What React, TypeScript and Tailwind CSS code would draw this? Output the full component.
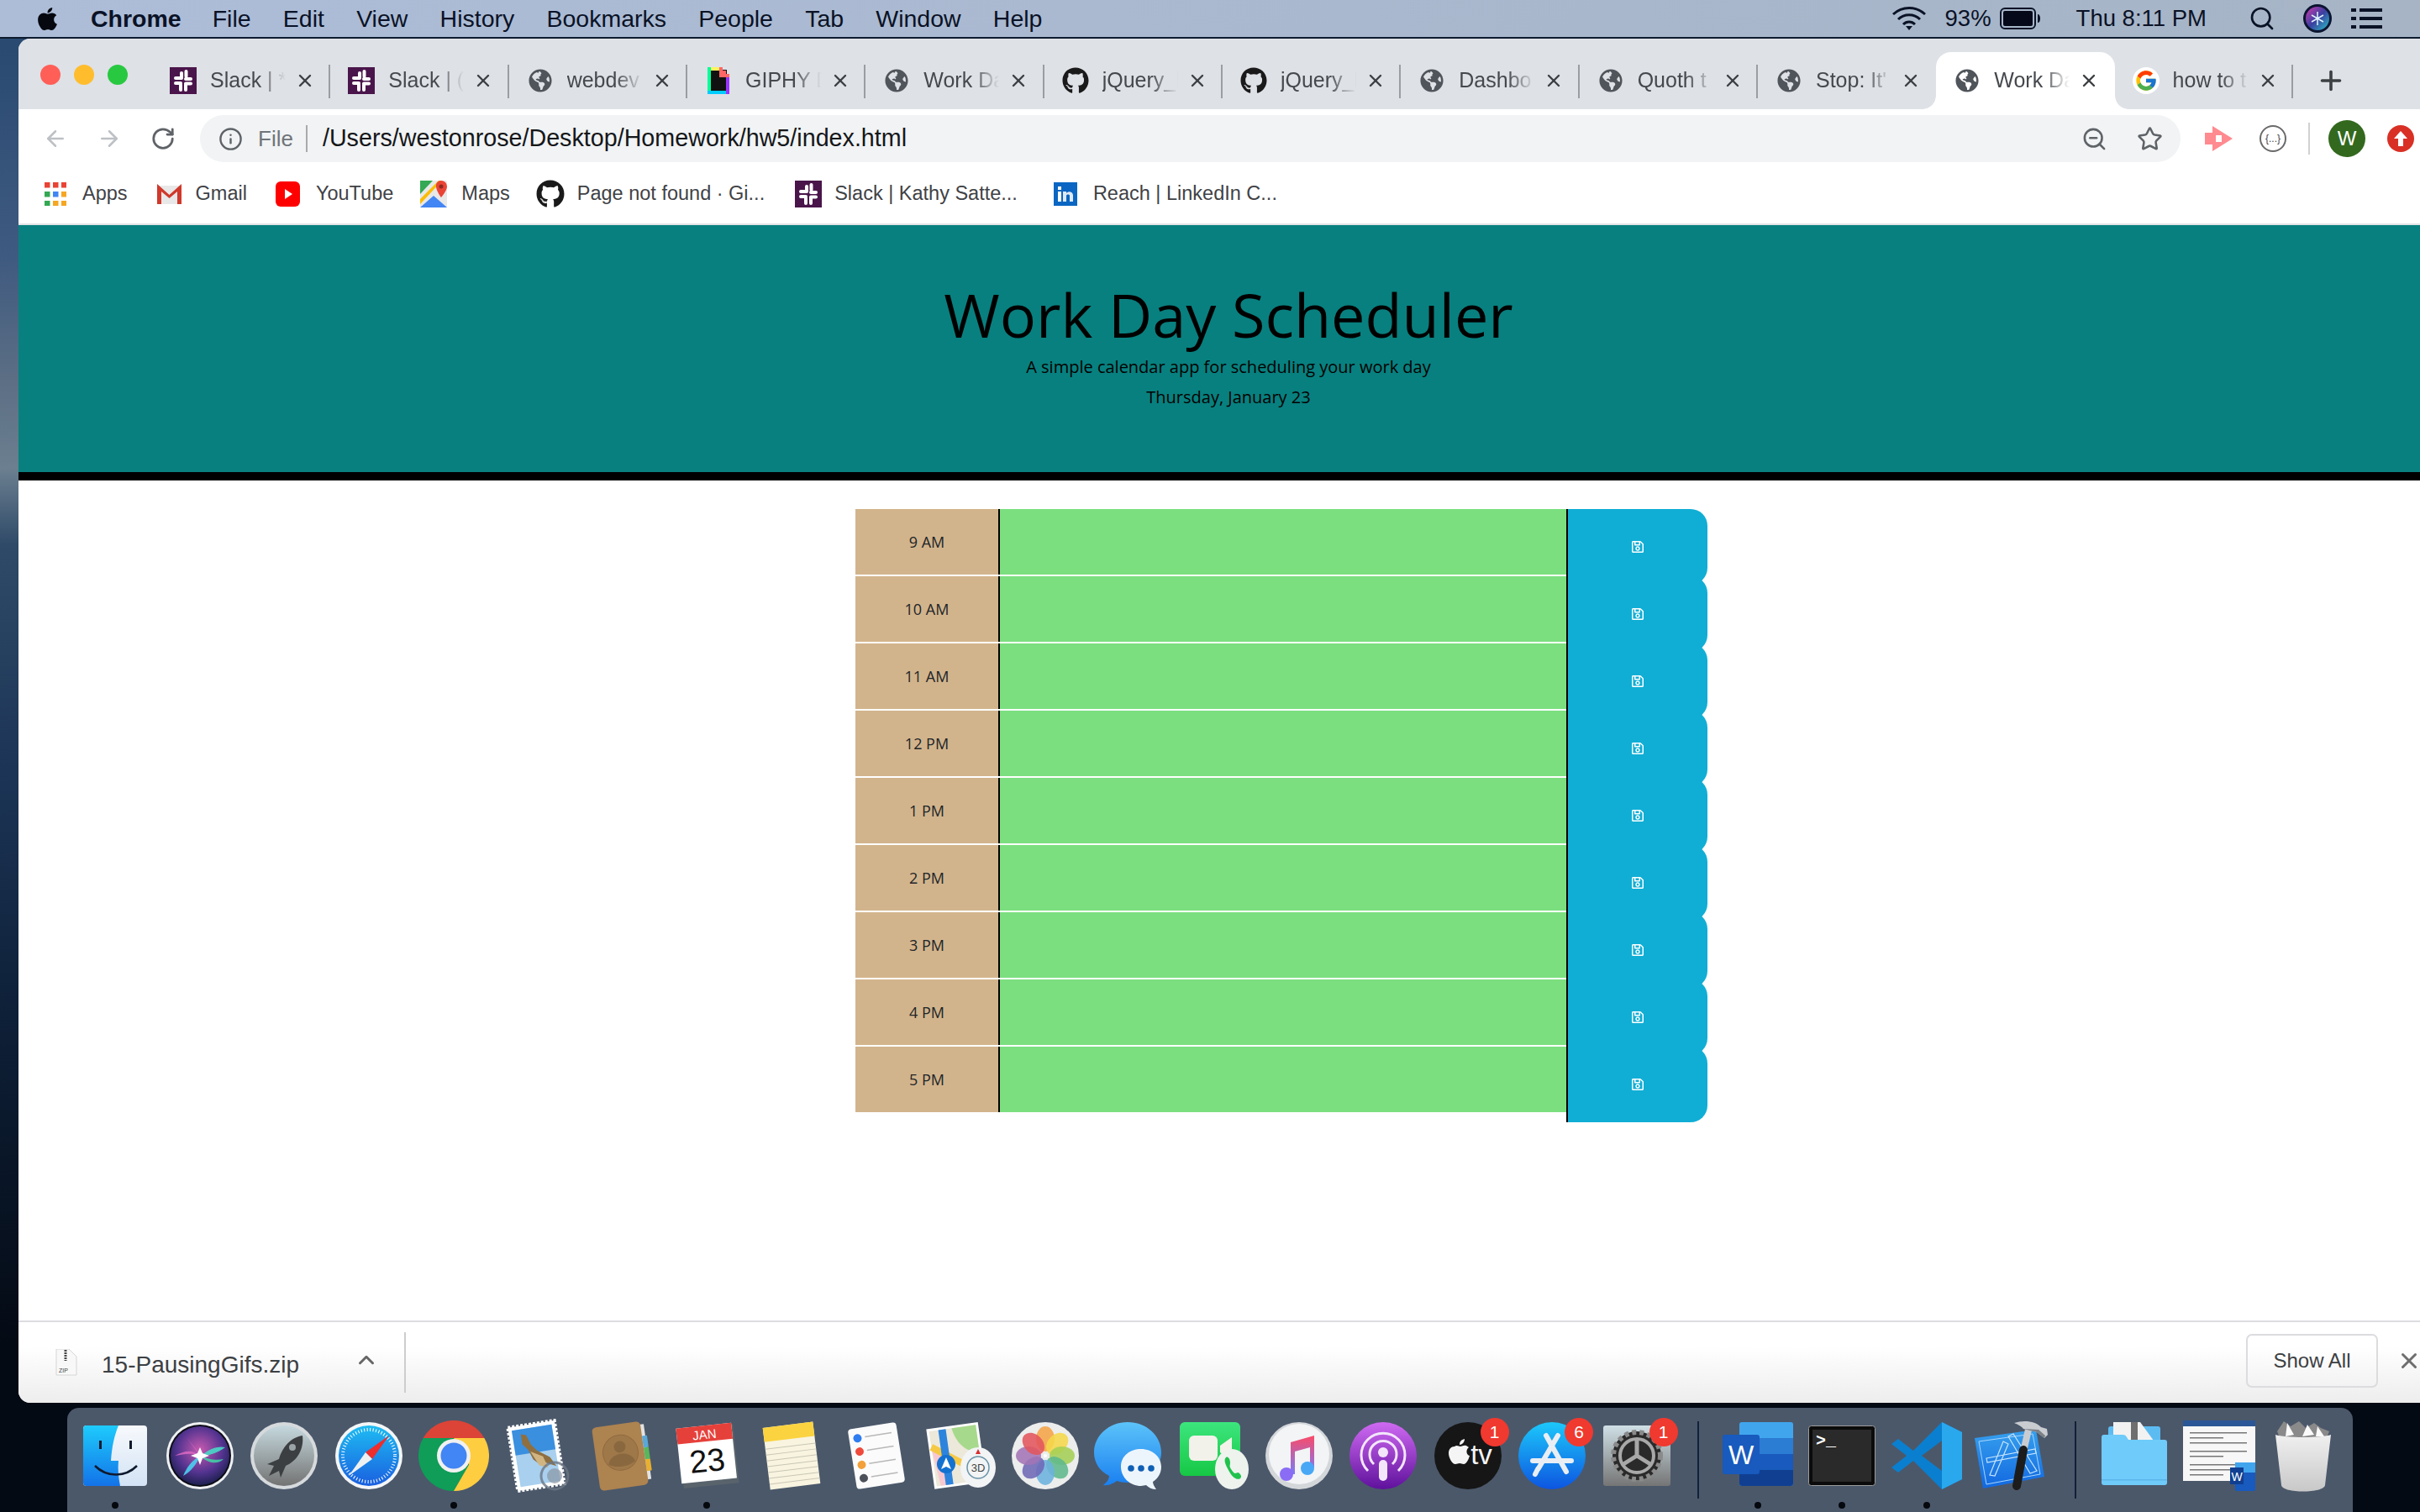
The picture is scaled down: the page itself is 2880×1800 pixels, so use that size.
import React from "react";
import { ArrowLeft, ArrowRight, ChevronUp, Info, Plus, RotateCw, Search, Star, X, ZoomOut } from "lucide-react";
import { FaApple, FaGithub, FaGlobeAmericas, FaRegSave } from "react-icons/fa";
import { FcGoogle } from "react-icons/fc";

const hours = ["9 AM", "10 AM", "11 AM", "12 PM", "1 PM", "2 PM", "3 PM", "4 PM", "5 PM"];

const SlackIcon = () => (
  <svg width="32" height="32" viewBox="0 0 32 32" className="shrink-0">
    <rect width="32" height="32" fill="#4a154b" />
    <g fill="#fff">
      <rect x="12" y="5" width="4" height="10" rx="2" />
      <rect x="17.5" y="3" width="4" height="10" rx="2" />
      <rect x="17" y="12" width="10" height="4" rx="2" />
      <rect x="5" y="11" width="10" height="4" rx="2" />
      <rect x="5" y="17" width="10" height="4" rx="2" />
      <rect x="17" y="17.5" width="10" height="4" rx="2" />
      <rect x="11" y="19" width="4" height="10" rx="2" />
      <rect x="17" y="19" width="4" height="10" rx="2" />
    </g>
  </svg>
);

const GiphyIcon = () => (
  <svg width="26" height="32" viewBox="0 0 26 32" className="shrink-0">
    <rect x="3" y="3" width="20" height="26" fill="#111" />
    <rect x="0" y="0" width="14" height="4" fill="#fff35c" />
    <rect x="0" y="0" width="4" height="32" fill="#00ff99" />
    <rect x="0" y="28" width="26" height="4" fill="#00ccff" />
    <rect x="22" y="8" width="4" height="24" fill="#9933ff" />
    <path d="M14 0h4v4h4v4h4v4H14z" fill="#ff6666" />
  </svg>
);

const GlobeIcon = () => <FaGlobeAmericas className="mx-[2px] shrink-0 text-[28px] text-[#50555b]" />;
const GithubIcon = () => <FaGithub className="shrink-0 text-[32px] text-[#1a1a1a]" />;
const GoogleIcon = () => (
  <span className="flex h-[32px] w-[32px] shrink-0 items-center justify-center rounded-full bg-white">
    <FcGoogle className="text-[28px]" />
  </span>
);

const tabs: { title: string; icon: React.ReactNode; active?: boolean; noSep?: boolean }[] = [
  { title: "Slack | *", icon: <SlackIcon /> },
  { title: "Slack | (", icon: <SlackIcon /> },
  { title: "webdev", icon: <GlobeIcon /> },
  { title: "GIPHY D", icon: <GiphyIcon /> },
  { title: "Work Da", icon: <GlobeIcon /> },
  { title: "jQuery_l", icon: <GithubIcon /> },
  { title: "jQuery_l", icon: <GithubIcon /> },
  { title: "Dashbo", icon: <GlobeIcon /> },
  { title: "Quoth t", icon: <GlobeIcon /> },
  { title: "Stop: It'", icon: <GlobeIcon />, noSep: true },
  { title: "Work Da", icon: <GlobeIcon />, active: true, noSep: true },
  { title: "how to t", icon: <GoogleIcon /> },
];

const Tab = ({ title, icon, active, noSep }: (typeof tabs)[number]) => (
  <div
    className={`relative flex h-[68px] w-[212.33px] shrink-0 items-center pl-[21px] ${
      active ? "rounded-t-[18px] bg-white" : ""
    }`}
  >
    {active && (
      <>
        <span className="absolute bottom-0 left-[-16px] h-[16px] w-[16px] bg-[radial-gradient(circle_at_0_0,#dee1e6_15.5px,#fff_16px)]" />
        <span className="absolute bottom-0 right-[-16px] h-[16px] w-[16px] bg-[radial-gradient(circle_at_100%_0,#dee1e6_15.5px,#fff_16px)]" />
      </>
    )}
    <span className="flex w-[32px] justify-center">{icon}</span>
    <span className="ml-[16px] w-[96px] overflow-hidden whitespace-nowrap text-[25px] text-[#45484c] [mask-image:linear-gradient(to_right,#000_60%,transparent_94%)]">
      {title}
    </span>
    <X className="ml-[5px] shrink-0 text-[#3c4043]" size={24} strokeWidth={2.4} />
    {!noSep && <span className="absolute right-0 top-[15px] h-[40px] w-[2px] bg-[#9a9da1]" />}
  </div>
);

const AppsIcon = () => (
  <svg width="26" height="28" viewBox="0 0 26 28">
    {["#ea4335", "#ea4335", "#ea4335", "#34a853", "#4285f4", "#f5a623", "#34a853", "#f5a623", "#f5a623"].map((c, i) => (
      <rect key={i} x={(i % 3) * 10} y={Math.floor(i / 3) * 11} width="6.5" height="6.5" fill={c} />
    ))}
  </svg>
);

const GmailIcon = () => (
  <svg width="29" height="24" viewBox="0 0 29 24">
    <path d="M0 2h29v22H0z" fill="#e8e8e8" />
    <path d="M0 0l14.5 13L29 0v24h-5V9l-9.500 8L5 9v15H0z" fill="#d0392b" />
  </svg>
);

const YoutubeIcon = () => (
  <svg width="29" height="30" viewBox="0 0 29 30">
    <rect width="29" height="30" rx="6" fill="#ff0000" />
    <path d="M11 9l9 6-9 6z" fill="#fff" />
  </svg>
);

const MapsIcon = () => (
  <svg width="32" height="32" viewBox="0 0 32 32">
    <rect width="32" height="32" rx="2" fill="#e8e8e8" />
    <path d="M0 0h15L0 16z" fill="#34a853" />
    <path d="M0 32l16-14 16 14z" fill="#4285f4" />
    <path d="M0 22L22 0h4L0 28z" fill="#fbbc04" />
    <path d="M25 0a7 7 0 0 1 7 7c0 5-7 13-7 13s-6-8-6-13a6 6 0 0 1 6-7z" fill="#ea4335" />
    <circle cx="25" cy="7" r="2.500" fill="#8e2a20" />
  </svg>
);

const LinkedinIcon = () => (
  <svg width="28" height="28" viewBox="0 0 28 28">
    <rect width="28" height="28" fill="#0a66c2" />
    <rect x="5" y="11" width="4" height="12" fill="#fff" />
    <rect x="5" y="5" width="4" height="4" fill="#fff" />
    <path d="M11 11h4v2c1-2 7-3 8 2v8h-4v-7c0-2-4-2-4 0v7h-4z" fill="#dfe9f5" />
  </svg>
);

const bookmarks: { label: string; icon: React.ReactNode; gap: number; after: number }[] = [
  { label: "Apps", icon: <AppsIcon />, gap: 19, after: 35 },
  { label: "Gmail", icon: <GmailIcon />, gap: 17, after: 34 },
  { label: "YouTube", icon: <YoutubeIcon />, gap: 19, after: 32 },
  { label: "Maps", icon: <MapsIcon />, gap: 17, after: 31 },
  { label: "Page not found · Gi...", icon: <FaGithub className="text-[34px] text-[#1a1a1a]" />, gap: 15, after: 36 },
  { label: "Slack | Kathy Satte...", icon: <SlackIcon />, gap: 15, after: 43 },
  { label: "Reach | LinkedIn C...", icon: <LinkedinIcon />, gap: 19, after: 0 },
];

function StatusBar() {
  return (
    <div className="flex h-[46px] shrink-0 items-center border-b-2 border-[#0d1b2e] bg-[linear-gradient(90deg,#adbdd8,#a6b4c6)] pl-[41px] pr-[45px] text-[28.5px] text-[#0a1226]">
      <FaApple className="text-[31px] text-[#05080f]" />
      <span className="ml-[36px] font-bold">Chrome</span>
      <div className="ml-[37px] flex gap-[38.2px]">
        {["File", "Edit", "View", "History", "Bookmarks", "People", "Tab", "Window", "Help"].map((m) => (
          <span key={m}>{m}</span>
        ))}
      </div>
      <div className="ml-auto flex items-center text-[27.5px]">
        <svg width="42" height="30" viewBox="0 0 42 30" fill="none" stroke="#0a1226" strokeWidth="3">
          <path d="M2 10c11-10 27-10 38 0" />
          <path d="M8 16c7-7 19-7 26 0" />
          <path d="M14 22c4-4 10-4 14 0" />
          <path d="M17 24l4 5 4-5z" fill="#0a1226" stroke="none" />
        </svg>
        <span className="ml-[22px]">93%</span>
        <svg className="ml-[10px]" width="48" height="26" viewBox="0 0 48 26">
          <rect x="1" y="1" width="41" height="24" rx="5" fill="none" stroke="#0a1226" strokeWidth="2" />
          <rect x="4" y="4" width="35" height="18" rx="2" fill="#050818" />
          <path d="M45 8c2 0 3 2 3 5s-1 5-3 5z" fill="#0a1226" />
        </svg>
        <span className="ml-[43px]">Thu 8:11 PM</span>
        <Search className="ml-[50px] text-[#0a1226]" size={32} strokeWidth={2} />
        <svg className="ml-[33px]" width="34" height="34" viewBox="0 0 34 34">
          <defs>
            <linearGradient id="siriSmall" x1="0" y1="0" x2="1" y2="1">
              <stop offset="0" stopColor="#d43ab0" />
              <stop offset="0.5" stopColor="#3a3fa0" />
              <stop offset="1" stopColor="#2ac4c8" />
            </linearGradient>
          </defs>
          <circle cx="17" cy="17" r="17" fill="#0b1430" />
          <circle cx="17" cy="17" r="14" fill="url(#siriSmall)" />
          <path d="M17 9v16M10 13l14 8M10 21l14-8" stroke="#dff4ff" strokeWidth="1.500" />
        </svg>
        <svg className="ml-[23px]" width="37" height="24" viewBox="0 0 37 24" fill="#0a1226">
          <rect width="6" height="4" />
          <rect y="10" width="6" height="4" />
          <rect y="20" width="6" height="4" />
          <rect x="10" width="27" height="4" />
          <rect x="10" y="10" width="27" height="4" />
          <rect x="10" y="20" width="27" height="4" />
        </svg>
      </div>
    </div>
  );
}

function BrowserChrome() {
  return (
    <>
      <div className="flex h-[84px] shrink-0 bg-[#dee1e6] pt-[16px]">
        <div className="flex h-[68px] w-[159px] shrink-0 items-start gap-[16px] pl-[26px] pt-[15px]">
          <span className="h-[24px] w-[24px] rounded-full bg-[#ff5f57]" />
          <span className="h-[24px] w-[24px] rounded-full bg-[#ffbd2e]" />
          <span className="h-[24px] w-[24px] rounded-full bg-[#28c940]" />
        </div>
        {tabs.map((t, i) => (
          <Tab key={i} {...t} />
        ))}
        <Plus className="ml-[27px] mt-[16px] text-[#3c4043]" size={36} strokeWidth={2.4} />
      </div>

      <div className="flex h-[70px] shrink-0 items-center bg-white">
        <ArrowLeft className="ml-[29px] text-[#bdc0c4]" size={30} strokeWidth={2} />
        <ArrowRight className="ml-[34px] text-[#bdc0c4]" size={30} strokeWidth={2} />
        <RotateCw className="ml-[34px] text-[#5f6368]" size={30} strokeWidth={2.2} />
        <div className="ml-[29px] flex h-[56px] w-[2357px] items-center rounded-full bg-[#f1f3f4] pl-[22px] text-[28.7px]">
          <Info className="text-[#5f6368]" size={29} strokeWidth={2} />
          <span className="ml-[18px] text-[26px] text-[#70757a]">File</span>
          <span className="ml-[15px] h-[32px] w-[2px] bg-[#a8abae]" />
          <span className="ml-[18px] text-[#15171a]">/Users/westonrose/Desktop/Homework/hw5/index.html</span>
          <ZoomOut className="ml-auto text-[#5f6368]" size={31} strokeWidth={2} />
          <Star className="ml-[35px] mr-[21px] text-[#5f6368]" size={31} strokeWidth={2} />
        </div>
        <svg className="ml-[29px]" width="33" height="30" viewBox="0 0 33 30" fill="#ff8a8f">
          <path d="M0 8h9V0l24 15L9 30v-8H0z" />
          <path d="M13 11h7v8h-7z" fill="#fff" />
        </svg>
        <span className="ml-[32px] flex h-[32px] w-[32px] items-center justify-center rounded-full border-2 border-[#6a6a6a] text-[12px] text-[#444]">
          {"{...}"}
        </span>
        <span className="ml-[26px] h-[38px] w-[2px] bg-[#cfd1d4]" />
        <span className="ml-[22px] flex h-[44px] w-[44px] items-center justify-center rounded-full bg-[#33691e] text-[24px] text-white">
          W
        </span>
        <span className="ml-[26px] flex h-[32px] w-[32px] shrink-0 items-center justify-center rounded-full bg-[#d93025]">
          <svg width="18" height="18" viewBox="0 0 18 18" fill="#fff">
            <path d="M9 0l8 9h-5v9H6V9H1z" />
          </svg>
        </span>
      </div>

      <div className="flex h-[66px] shrink-0 items-center bg-white pb-[4px] pl-[31px] text-[23.5px] text-[#3f4246]">
        {bookmarks.map((b) => (
          <div key={b.label} className="flex items-center" style={{ marginRight: b.after }}>
            <span className="flex h-[34px] items-center">{b.icon}</span>
            <span className="whitespace-nowrap" style={{ marginLeft: b.gap }}>
              {b.label}
            </span>
          </div>
        ))}
      </div>
      <div className="h-[2px] shrink-0 bg-[#e3e3e6]" />
    </>
  );
}

function Scheduler() {
  return (
    <div className="min-h-0 flex-1 bg-white font-['Open_Sans',sans-serif]">
      <header className="flex h-[304px] flex-col items-center border-b-[10px] border-black bg-[#08807f] pl-[22px] pt-[63px] text-black">
        <h1 className="text-[72px] leading-[86px]">Work Day Scheduler</h1>
        <p className="mt-[5px] text-[20px] leading-[30px]">A simple calendar app for scheduling your work day</p>
        <p className="mt-[6px] text-[20px] leading-[30px]">Thursday, January 23</p>
      </header>
      <div className="ml-[996px] mt-[34px] w-[1014px]">
        {hours.map((h) => (
          <div key={h} className="flex h-[80px] items-start">
            <div className="flex h-[78px] w-[170px] shrink-0 items-center justify-center bg-[#d2b48c] text-[18px] text-[#212529]">
              {h}
            </div>
            <div className="h-[78px] w-[676px] shrink-0 border-l-2 border-black bg-[#7bdf7f]" />
            <button className="relative flex h-[90px] w-[168px] shrink-0 items-center justify-center rounded-r-[20px] border-l-2 border-black bg-[#10aed5] text-white">
              <FaRegSave className="text-[16px]" />
            </button>
          </div>
        ))}
      </div>
    </div>
  );
}

function DownloadBar() {
  return (
    <div className="flex h-[98px] shrink-0 items-center border-t-2 border-[#dcdce2] bg-[linear-gradient(#fff_30%,#ededed)]">
      <svg className="ml-[44px]" width="26" height="32" viewBox="0 0 26 32">
        <path d="M1 0h15l9 9v22H1z" fill="#f8f8f8" stroke="#d5d5d5" />
        <path d="M12 1v13" stroke="#444" strokeWidth="3" strokeDasharray="2 1" />
        <text x="4" y="28" fontSize="7" fontFamily="Liberation Sans" fill="#444">ZIP</text>
      </svg>
      <span className="ml-[29px] mt-[6px] text-[28px] text-[#3c4043]">15-PausingGifs.zip</span>
      <ChevronUp className="-mt-[7px] ml-[65px] text-[#666]" size={30} strokeWidth={2.4} />
      <span className="ml-[30px] h-[72px] w-[2px] bg-[#cdcdcd]" />
      <button className="-mt-[5px] ml-auto flex h-[64px] w-[157px] items-center justify-center rounded-[7px] border-2 border-[#dcdce0] text-[24px] text-[#3c4043]">
        Show All
      </button>
      <X className="-mr-[2px] -mt-[5px] ml-[22px] shrink-0 text-[#6e6e6e]" size={30} strokeWidth={2.4} />
    </div>
  );
}

const Finder = () => (
  <svg width="76" height="72" viewBox="0 0 76 72">
    <defs>
      <linearGradient id="fL" x1="0" y1="0" x2="0" y2="1">
        <stop offset="0" stopColor="#1ecbfc" />
        <stop offset="1" stopColor="#1373e8" />
      </linearGradient>
      <linearGradient id="fR" x1="0" y1="0" x2="0" y2="1">
        <stop offset="0" stopColor="#f7f9fc" />
        <stop offset="1" stopColor="#d3e3f5" />
      </linearGradient>
    </defs>
    <rect width="76" height="72" rx="4" fill="url(#fR)" />
    <path d="M4 0h38c-5 12-8 26-9 42h9c-1 10 0 20 2 30H4a4 4 0 0 1-4-4V4a4 4 0 0 1 4-4z" fill="url(#fL)" />
    <rect x="19" y="18" width="3" height="10" fill="#101a2e" />
    <rect x="55" y="18" width="3" height="10" fill="#101a2e" />
    <path d="M14 48c14 14 36 14 50 0" fill="none" stroke="#101a2e" strokeWidth="2.500" />
  </svg>
);

const Siri = () => (
  <svg width="80" height="80" viewBox="0 0 80 80">
    <defs>
      <radialGradient id="siriG" cx="0.5" cy="0.4" r="0.65">
        <stop offset="0" stopColor="#c75ab0" />
        <stop offset="0.6" stopColor="#52338f" />
        <stop offset="1" stopColor="#121c42" />
      </radialGradient>
    </defs>
    <circle cx="40" cy="40" r="40" fill="#eef0f2" />
    <circle cx="40" cy="40" r="37" fill="#0d0d18" />
    <circle cx="40" cy="40" r="35" fill="url(#siriG)" />
    <path d="M24 18c6 8 12 14 16 22-10-4-18-2-30 0 12-6 20-8 30 0z" fill="#e06cc4" opacity=".8" />
    <path d="M42 40c8-8 18-12 28-10-8 6-18 10-28 10z" fill="#48d8c8" opacity=".9" />
    <path d="M40 40c-4 10-10 18-20 24 4-10 10-18 20-24z" fill="#4ad0f0" opacity=".9" />
    <path d="M40 40c10 4 18 6 28 4-8 8-20 4-28-4z" fill="#3fe0a8" opacity=".8" />
    <path d="M40 30l3 7 8 3-8 3-3 8-3-8-8-3 8-3z" fill="#fff" />
  </svg>
);

const Launchpad = () => (
  <svg width="80" height="80" viewBox="0 0 80 80">
    <defs>
      <linearGradient id="lpG" x1="0" y1="0" x2="0" y2="1">
        <stop offset="0" stopColor="#c6d9df" />
        <stop offset="1" stopColor="#737373" />
      </linearGradient>
    </defs>
    <circle cx="40" cy="40" r="40" fill="#d6dadd" />
    <circle cx="40" cy="40" r="36" fill="url(#lpG)" />
    <path d="M62 16c-14 2-24 14-28 28l-14 6 8 2-6 12 12-6 2 8 6-14c14-6 22-20 20-36z" fill="#3c3f41" />
    <circle cx="50" cy="30" r="4" fill="#9aa3a6" />
  </svg>
);

const Safari = () => (
  <svg width="80" height="80" viewBox="0 0 80 80">
    <defs>
      <linearGradient id="saG" x1="0" y1="0" x2="0" y2="1">
        <stop offset="0" stopColor="#1ebcf2" />
        <stop offset="1" stopColor="#1a5fe0" />
      </linearGradient>
    </defs>
    <circle cx="40" cy="40" r="40" fill="#f4f6f7" />
    <circle cx="40" cy="40" r="36" fill="url(#saG)" />
    <circle cx="40" cy="40" r="31" fill="none" stroke="#fff" strokeWidth="4" strokeDasharray="1 2.500" />
    <path d="M64 16L36 36l8 8z" fill="#ee2d2d" />
    <path d="M16 64l20-28 8 8z" fill="#eef0f2" />
  </svg>
);

const Chrome = () => (
  <svg width="84" height="84" viewBox="0 0 84 84">
    <path d="M5.600 21A42 42 0 0 1 78.400 21H42z" fill="#db4437" />
    <path d="M5.600 21A42 42 0 0 0 42 84l18-31-18-32H24z" fill="#0f9d58" />
    <path d="M78.400 21A42 42 0 0 1 42 84l18.200-31.500L42 21z" fill="#ffcd40" />
    <circle cx="42" cy="42" r="20" fill="#f1f1f1" />
    <circle cx="42" cy="42" r="15.500" fill="#4285f4" />
  </svg>
);

const Mail = () => (
  <svg width="84" height="88" viewBox="0 0 84 88">
    <g transform="rotate(-9 40 44)">
      <rect x="12" y="6" width="56" height="76" fill="#fff" stroke="#fff" strokeWidth="4" strokeDasharray="3 2" />
      <rect x="16" y="10" width="48" height="68" fill="#a9d0ee" />
      <path d="M16 10h48v30H16z" fill="#3a8fdf" />
      <path d="M26 16l6 2 4 12 6 8 14 10 6 12-12-6-6 2-8-8-4-12-6-8z" fill="#8f6f40" />
      <path d="M34 38l8 18 10 4-4-14z" fill="#d0b482" />
    </g>
    <circle cx="62" cy="68" r="16" fill="none" stroke="#6a7684" strokeWidth="3" opacity=".8" />
    <circle cx="62" cy="68" r="9" fill="#8a96a4" opacity=".7" />
  </svg>
);

const Contacts = () => (
  <svg width="76" height="88" viewBox="0 0 76 88">
    <g transform="rotate(-8 38 44)">
      <rect x="60" y="10" width="8" height="66" fill="#e3e3e3" />
      <rect x="64" y="24" width="6" height="14" fill="#5aa8d8" />
      <rect x="64" y="38" width="6" height="14" fill="#5ab65a" />
      <rect x="64" y="52" width="6" height="14" fill="#e8b030" />
      <rect x="6" y="6" width="58" height="76" rx="5" fill="#ad8350" />
      <circle cx="36" cy="40" r="21" fill="#9f784a" stroke="#8f6a40" />
      <circle cx="36" cy="33" r="7" fill="#8a683f" />
      <path d="M20 52c4-14 28-14 32 0-8 6-24 6-32 0z" fill="#8a683f" />
    </g>
  </svg>
);

const Calendar = () => (
  <svg width="78" height="84" viewBox="0 0 78 84">
    <g transform="rotate(-6 39 42)">
      <rect x="8" y="8" width="66" height="70" fill="#59636b" />
      <rect x="6" y="6" width="66" height="66" fill="#fff" />
      <rect x="6" y="6" width="66" height="19" fill="#e6403a" />
      <text x="39" y="22" textAnchor="middle" fontSize="15" fill="#fff" fontFamily="Liberation Sans">JAN</text>
      <text x="39" y="61" textAnchor="middle" fontSize="38" fill="#111" fontFamily="Liberation Sans">23</text>
    </g>
  </svg>
);

const Notes = () => (
  <svg width="76" height="84" viewBox="0 0 76 84">
    <g transform="rotate(-7 38 42)">
      <rect x="8" y="5" width="60" height="74" fill="#f8f4e0" />
      <rect x="8" y="5" width="60" height="17" fill="#fbd340" />
      {[30, 37, 44, 51, 58, 65, 72].map((y) => (
        <rect key={y} x="8" y={y} width="60" height="1" fill="#c9c6b5" />
      ))}
    </g>
  </svg>
);

const Reminders = () => (
  <svg width="72" height="84" viewBox="0 0 72 84">
    <g transform="rotate(-9 36 42)">
      <rect x="7" y="6" width="58" height="72" rx="4" fill="#fbfbfb" />
      {[["#2f7df0", 18], ["#ef4a3c", 34], ["#f3a03a", 50], ["#4c5058", 66]].map(([c, y]) => (
        <g key={c as string}>
          <circle cx="17" cy={y as number} r="5" fill={c as string} />
          <rect x="26" y={(y as number) - 1} width="32" height="1.500" fill="#b8b8b8" />
        </g>
      ))}
    </g>
  </svg>
);

const Maps = () => (
  <svg width="84" height="84" viewBox="0 0 84 84">
    <g transform="rotate(-8 36 42)">
      <rect x="6" y="6" width="62" height="72" fill="#fff" />
      <rect x="9" y="9" width="56" height="66" fill="#ece8da" />
      <path d="M36 9h29v32c-14 0-26-12-29-32z" fill="#a7d98c" />
      <path d="M9 30l16 6v39H14z" fill="#f8c8d0" />
      <path d="M9 28l48 34" stroke="#f6c945" strokeWidth="8" />
      <rect x="20" y="9" width="9" height="66" fill="#2d84dc" />
    </g>
    <circle cx="25" cy="52" r="11" fill="#1372d0" />
    <path d="M25 44l6 14-6-3-6 3z" fill="#fff" />
    <ellipse cx="63" cy="56" rx="21" ry="24" fill="#f2f4f5" />
    <circle cx="63" cy="56" r="13" fill="none" stroke="#6a94a8" strokeWidth="1.500" />
    <path d="M63 34l3 6h-6z" fill="#d92e2e" />
    <text x="63" y="61" textAnchor="middle" fontSize="13" fill="#444" fontFamily="Liberation Sans">3D</text>
  </svg>
);

const Photos = () => {
  const colors = ["#f5a445", "#f5d74a", "#a4cf55", "#5fb88c", "#6cb2de", "#6e68b6", "#a374b6", "#e2555c"];
  return (
    <svg width="80" height="80" viewBox="0 0 80 80">
      <circle cx="40" cy="40" r="40" fill="#eceded" />
      {colors.map((c, i) => (
        <ellipse key={c} cx="40" cy="20" rx="11" ry="15" fill={c} opacity=".88" transform={`rotate(${i * 45} 40 40)`} />
      ))}
      <circle cx="40" cy="40" r="2" fill="#fff" />
    </svg>
  );
};

const Messages = () => (
  <svg width="84" height="80" viewBox="0 0 84 80">
    <defs>
      <linearGradient id="msgG" x1="0" y1="0" x2="0" y2="1">
        <stop offset="0" stopColor="#5cc3fa" />
        <stop offset="1" stopColor="#1a80f0" />
      </linearGradient>
    </defs>
    <path d="M40 0c22 0 40 16 40 36 0 20-18 36-40 36-5 0-9-1-13-2-4 3-10 6-16 5 4-3 7-7 7-11C6 58 0 48 0 36 0 16 18 0 40 0z" fill="url(#msgG)" />
    <path d="M56 32c13 0 24 9 24 21 0 8-4 14-10 18 0 3 2 6 4 9-5 0-9-2-12-5-2 0-4 1-6 1-13 0-24-10-24-23s11-21 24-21z" fill="#edf5fc" />
    <circle cx="44" cy="55" r="3.800" fill="#0f5fb5" />
    <circle cx="56" cy="55" r="3.800" fill="#0f5fb5" />
    <circle cx="68" cy="55" r="3.800" fill="#0f5fb5" />
  </svg>
);

const FaceTime = () => (
  <svg width="82" height="80" viewBox="0 0 82 80">
    <defs>
      <linearGradient id="ftG" x1="0" y1="0" x2="0" y2="1">
        <stop offset="0" stopColor="#3de57d" />
        <stop offset="1" stopColor="#16c845" />
      </linearGradient>
    </defs>
    <rect width="72" height="64" rx="6" fill="url(#ftG)" />
    <rect x="11" y="16" width="34" height="30" rx="6" fill="#f2f2ea" />
    <path d="M48 28l14-10v28l-14-10z" fill="#f2f2ea" />
    <ellipse cx="62" cy="56" rx="20" ry="24" fill="#eef3ee" />
    <path d="M55 42c3-2 5 3 5 6s-1 4 0 6 4 7 6 7 3-2 5 0 3 4 1 6-8 1-13-8-7-14-4-17z" fill="#20c24c" />
  </svg>
);

const Music = () => (
  <svg width="80" height="80" viewBox="0 0 80 80">
    <defs>
      <linearGradient id="muG" x1="0" y1="0" x2="0" y2="1">
        <stop offset="0" stopColor="#fb4a68" />
        <stop offset="1" stopColor="#7a7af8" />
      </linearGradient>
    </defs>
    <circle cx="40" cy="40" r="40" fill="#d4d7da" />
    <circle cx="40" cy="38" r="36" fill="#f2f4f6" />
    <path d="M30 24l28-8v38h-5V30l-18 5v27h-5z" fill="url(#muG)" />
    <circle cx="25" cy="62" r="8" fill="#8a6cf5" />
    <circle cx="50" cy="55" r="8" fill="#48a8f5" />
  </svg>
);

const Podcasts = () => (
  <svg width="80" height="80" viewBox="0 0 80 80">
    <defs>
      <linearGradient id="poG" x1="0" y1="0" x2="0" y2="1">
        <stop offset="0" stopColor="#cf6af2" />
        <stop offset="1" stopColor="#5f119c" />
      </linearGradient>
    </defs>
    <circle cx="40" cy="40" r="40" fill="url(#poG)" />
    <g fill="none" stroke="#f3e6fb" strokeWidth="3">
      <path d="M22 58a26 26 0 1 1 36 0" />
      <path d="M29 50a16 16 0 1 1 22 0" />
    </g>
    <circle cx="40" cy="36" r="6" fill="#f3e6fb" />
    <rect x="35" y="45" width="10" height="25" rx="5" fill="#f3e6fb" />
  </svg>
);

const AppleTv = () => (
  <svg width="80" height="80" viewBox="0 0 80 80">
    <circle cx="40" cy="40" r="40" fill="#161616" />
    <path d="M24 29c3-2 5 0 7 0 1 0 4-2 7-1l3 2c-4 3-3 9 1 10-1 4-4 10-7 10-2 0-3-1-5-1s-3 1-5 1c-4 0-8-8-8-13 0-5 3-8 7-8zM30 27c0-4 2-6 6-7 0 4-3 7-6 7z" fill="#f5f5f5" />
    <text x="56" y="50" textAnchor="middle" fontSize="33" fill="#f5f5f5" fontFamily="Liberation Sans">tv</text>
  </svg>
);

const AppStore = () => (
  <svg width="80" height="80" viewBox="0 0 80 80">
    <defs>
      <linearGradient id="asG" x1="0" y1="0" x2="0" y2="1">
        <stop offset="0" stopColor="#1cc8fb" />
        <stop offset="1" stopColor="#0d55e0" />
      </linearGradient>
    </defs>
    <circle cx="40" cy="40" r="40" fill="url(#asG)" />
    <g stroke="#e9eef5" strokeWidth="6" strokeLinecap="round">
      <path d="M47 16L24 55" />
      <path d="M33 16l24 43" />
      <path d="M17 46h46" />
      <path d="M23 56l-3 6" />
    </g>
  </svg>
);

const SystemPrefs = () => (
  <svg width="80" height="72" viewBox="0 0 80 72">
    <defs>
      <linearGradient id="spG" x1="0" y1="0" x2="0" y2="1">
        <stop offset="0" stopColor="#cfe0e6" />
        <stop offset="1" stopColor="#757575" />
      </linearGradient>
    </defs>
    <rect width="80" height="72" rx="3" fill="url(#spG)" />
    <circle cx="40" cy="36" r="29" fill="#2a2a2a" />
    <circle cx="40" cy="36" r="28" fill="none" stroke="#8a8a8a" strokeWidth="6" strokeDasharray="5 4" />
    <circle cx="40" cy="36" r="20" fill="none" stroke="#a8a8a8" strokeWidth="4" />
    <path d="M40 36V17M40 36L24 46M40 36l16 10" stroke="#a8a8a8" strokeWidth="5" />
  </svg>
);

const Word = () => (
  <svg width="84" height="80" viewBox="0 0 84 80">
    <rect x="20" y="0" width="64" height="76" rx="3" fill="#41a5ee" />
    <rect x="20" y="19" width="64" height="19" fill="#2b7cd3" />
    <rect x="20" y="38" width="64" height="19" fill="#185abd" />
    <path d="M20 57h64v16a3 3 0 0 1-3 3H23a3 3 0 0 1-3-3z" fill="#103f91" />
    <rect x="0" y="15" width="44" height="47" rx="3" fill="#185abd" />
    <text x="22" y="50" textAnchor="middle" fontSize="32" fill="#fff" fontFamily="Liberation Sans">W</text>
  </svg>
);

const Terminal = () => (
  <svg width="80" height="72" viewBox="0 0 80 72">
    <rect x="0.500" y="0.500" width="79" height="71" rx="3" fill="#0b0b0b" stroke="#9c9c9c" />
    <rect x="5" y="5" width="70" height="62" fill="#2a2a2a" />
    <text x="9" y="24" fontSize="20" fontWeight="700" fill="#fff" fontFamily="Liberation Mono">{">_"}</text>
  </svg>
);

const VSCode = () => (
  <svg width="84" height="80" viewBox="0 0 84 80">
    <path d="M60 0l24 12v56L60 80 26 46 8 60 0 54l18-14L0 26l8-6 18 14z" fill="#0a7fcf" />
    <path d="M60 0l24 12v56L60 80z" fill="#2aa8ee" />
    <path d="M60 22v36L36 40z" fill="#4b586a" />
  </svg>
);

const Xcode = () => (
  <svg width="90" height="86" viewBox="0 0 90 86">
    <defs>
      <linearGradient id="xcG" x1="0" y1="0" x2="0" y2="1">
        <stop offset="0" stopColor="#36a0ee" />
        <stop offset="1" stopColor="#1268e0" />
      </linearGradient>
    </defs>
    <path d="M2 22l73-10 10 56-73 14z" fill="url(#xcG)" />
    <path d="M7 26l64-9 9 48-64 12z" fill="none" stroke="#a8d6fb" strokeWidth="1" />
    <path d="M20 66L36 26l6 3-16 38zM42 20l6-3 28 44-8 3zM16 46l58-11 1 5-58 11z" fill="none" stroke="#c8e6fd" strokeWidth="1.200" />
    <path d="M66 12l-6 26" stroke="#c8ccd0" strokeWidth="8" />
    <path d="M60 36L52 79" stroke="#1c1c1c" strokeWidth="10" strokeLinecap="round" />
    <path d="M49 4c12-4 26-2 32 5l7 2 1 7-4 4-9-7-16-4C58 8 54 6 49 4z" fill="#c9ccd0" />
    <path d="M60 11l16 4 9 7 1-3-8-7z" fill="#7b8086" />
  </svg>
);

const Folder = () => (
  <svg width="78" height="84" viewBox="0 0 78 84">
    <rect x="8" y="7" width="62" height="30" rx="3" fill="#5cbcf2" />
    <path d="M14 2h32l16 22H14z" fill="#f2f2f2" />
    <rect x="35" y="2" width="8" height="22" fill="#6f6f6f" />
    <path d="M3 17h22c3 0 4 1 5 3l2 3h43a3 3 0 0 1 3 3v48a3 3 0 0 1-3 3H3a3 3 0 0 1-3-3V20a3 3 0 0 1 3-3z" fill="#6fcbf9" />
    <rect x="0" y="70" width="78" height="1.500" fill="#5cb6ea" />
  </svg>
);

const DocPreview = () => (
  <svg width="86" height="84" viewBox="0 0 86 84">
    <rect x="0" y="0" width="86" height="72" fill="#f7f7f7" />
    <rect x="0" y="0" width="86" height="7" fill="#2b5797" />
    {[14, 20, 26, 36, 42, 52, 58, 64].map((y, i) => (
      <rect key={y} x="8" y={y} width={i % 3 === 1 ? 40 : 68} height="1.500" fill="#777" />
    ))}
    <rect x="62" y="50" width="24" height="34" rx="2" fill="#185abd" />
    <rect x="62" y="50" width="24" height="12" fill="#41a5ee" />
    <rect x="56" y="56" width="16" height="20" fill="#103f91" />
    <text x="64" y="72" textAnchor="middle" fontSize="14" fill="#fff" fontFamily="Liberation Sans">W</text>
  </svg>
);

const Trash = () => (
  <svg width="66" height="86" viewBox="0 0 66 86">
    <defs>
      <linearGradient id="trG" x1="0" y1="0" x2="0" y2="1">
        <stop offset="0" stopColor="#f0f0f0" />
        <stop offset="1" stopColor="#c8c8c8" />
      </linearGradient>
    </defs>
    <path d="M2 14l8-12 8 6 10-6 8 8 10-6 8 6 10 4-4 10H6z" fill="#8a8a8a" />
    <path d="M14 4l8 14-10 2zM38 6l8 12-14 2zM50 8l8 12-10 0z" fill="#fbfbfb" />
    <path d="M0 18c10 4 56 4 66 0l-7 60c-1 10-51 10-52 0z" fill="url(#trG)" />
  </svg>
);

type DockEntry = { icon: React.ReactNode; dot?: boolean; badge?: string };

const dockA: DockEntry[] = [
  { icon: <Finder />, dot: true },
  { icon: <Siri /> },
  { icon: <Launchpad /> },
  { icon: <Safari /> },
  { icon: <Chrome />, dot: true },
  { icon: <Mail /> },
  { icon: <Contacts /> },
  { icon: <Calendar />, dot: true },
  { icon: <Notes /> },
  { icon: <Reminders /> },
  { icon: <Maps /> },
  { icon: <Photos /> },
  { icon: <Messages /> },
  { icon: <FaceTime /> },
  { icon: <Music /> },
  { icon: <Podcasts /> },
  { icon: <AppleTv />, badge: "1" },
  { icon: <AppStore />, badge: "6" },
  { icon: <SystemPrefs />, badge: "1" },
];
const dockB: DockEntry[] = [
  { icon: <Word />, dot: true },
  { icon: <Terminal />, dot: true },
  { icon: <VSCode />, dot: true },
  { icon: <Xcode /> },
];
const dockC: DockEntry[] = [{ icon: <Folder /> }, { icon: <DocPreview /> }, { icon: <Trash /> }];

const DockItem = ({ icon, dot, badge }: DockEntry) => (
  <div className="relative flex w-[100.6px] shrink-0 flex-col items-center pt-[13px]">
    <div className="flex h-[88px] items-center justify-center">{icon}</div>
    <span className={`mt-[11px] h-[8px] w-[8px] rounded-full ${dot ? "bg-[#05080d]" : "bg-transparent"}`} />
    {badge && (
      <span className="absolute left-[65px] top-[12px] flex h-[34px] w-[34px] items-center justify-center rounded-full bg-[#f0392f] text-[21px] text-white">
        {badge}
      </span>
    )}
  </div>
);

function Dock() {
  return (
    <div className="ml-[80px] mt-[6px] flex h-[124px] w-[2720px] shrink-0 rounded-t-[14px] bg-[#4b586a] pl-[7px]">
      {dockA.map((d, i) => <DockItem key={i} {...d} />)}
      <span className="ml-[22px] mr-[19px] mt-[16px] h-[92px] w-[2px] bg-[#12213a]" />
      {dockB.map((d, i) => <DockItem key={i} {...d} />)}
      <span className="ml-[25px] mr-[19px] mt-[16px] h-[92px] w-[2px] bg-[#12213a]" />
      {dockC.map((d, i) => <DockItem key={i} {...d} />)}
    </div>
  );
}

export default function App() {
  return (
    <div className="flex h-[1800px] w-[2880px] flex-col overflow-hidden bg-[linear-gradient(#2a4a72_3%,#3f5a80_17%,#5b6e84_25%,#6b7f90_31%,#2f4a68_36%,#1d3658_50%,#0e2038_67%,#040a14_89%)] font-['Liberation_Sans',sans-serif]">
      <StatusBar />
      <div className="ml-[22px] flex h-[1624px] shrink-0 flex-col overflow-hidden rounded-l-[14px] bg-white">
        <BrowserChrome />
        <Scheduler />
        <DownloadBar />
      </div>
      <Dock />
    </div>
  );
}
